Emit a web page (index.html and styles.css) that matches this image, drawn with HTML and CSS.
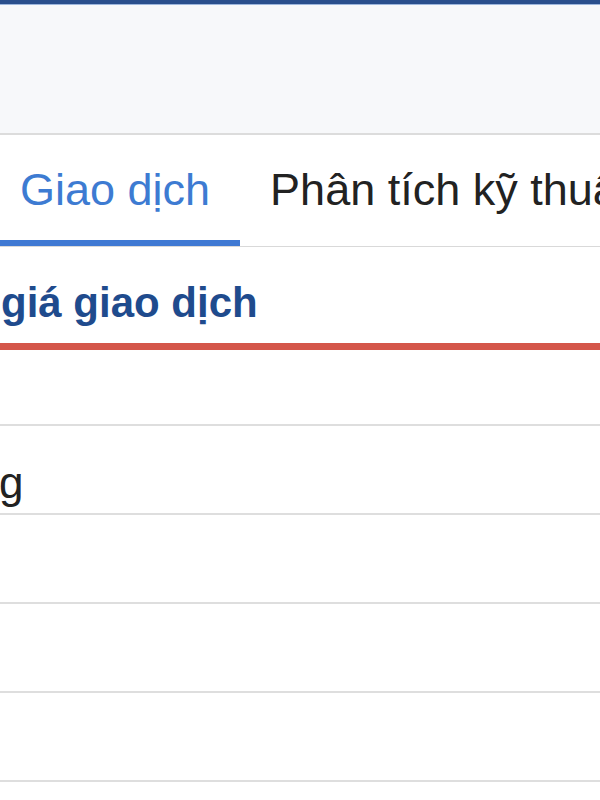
FILE: index.html
```html
<!DOCTYPE html>
<html lang="vi">
<head>
<meta charset="utf-8">
<title>Giao dịch</title>
<link rel="stylesheet" href="styles.css">
</head>
<body>
<div class="page">
  <header class="topbar"></header>
  <div class="banner"></div>
  <nav class="tabs">
    <div class="tab active">Giao dịch</div>
    <div class="tab">Phân tích kỹ thuật</div>
  </nav>
  <h2 class="section-title">giá giao dịch</h2>
  <ul class="rows">
    <li class="row first"></li>
    <li class="row"><span class="row-text">g</span></li>
    <li class="row"></li>
    <li class="row"></li>
    <li class="row"></li>
  </ul>
</div>
</body>
</html>
```
FILE: styles.css
```css
html, body {
  margin: 0;
  padding: 0;
  background: #ffffff;
  overflow: hidden;
}
body {
  width: 600px;
  height: 800px;
  font-family: "Liberation Sans", Arial, sans-serif;
}
.page {
  width: 600px;
  overflow: hidden;
}
.topbar {
  height: 4px;
  background: #2a4f8c;
  border-bottom: 1px solid #9db6dc;
}
.banner {
  height: 128px;
  background: #f7f8fa;
  border-bottom: 2px solid #dcdcdc;
}
.tabs {
  display: flex;
  margin-left: -10px;
  white-space: nowrap;
  border-bottom: 1px solid #d9d9d9;
}
.tab {
  flex: none;
  padding: 32px 30px 28px;
  font-size: 45px;
  line-height: 45px;
  color: #222222;
  border-bottom: 6px solid transparent;
}
.tab.active {
  color: #3d7bd2;
  border-bottom-color: #3f79d3;
}
.section-title {
  margin: 0;
  padding: 35px 0 19px 1px;
  font-size: 42px;
  line-height: 42px;
  font-weight: bold;
  color: #1f4b8d;
  white-space: nowrap;
  border-bottom: 7px solid #d4564a;
}
.rows {
  list-style: none;
  margin: 0;
  padding: 0;
}
.row {
  height: 87px;
  border-bottom: 2px solid #dedede;
  box-sizing: content-box;
}
.row.first {
  height: 74px;
}
.row-text {
  display: block;
  padding-top: 35px;
  margin-left: -1px;
  font-size: 44px;
  line-height: 44px;
  color: #222222;
}
```
